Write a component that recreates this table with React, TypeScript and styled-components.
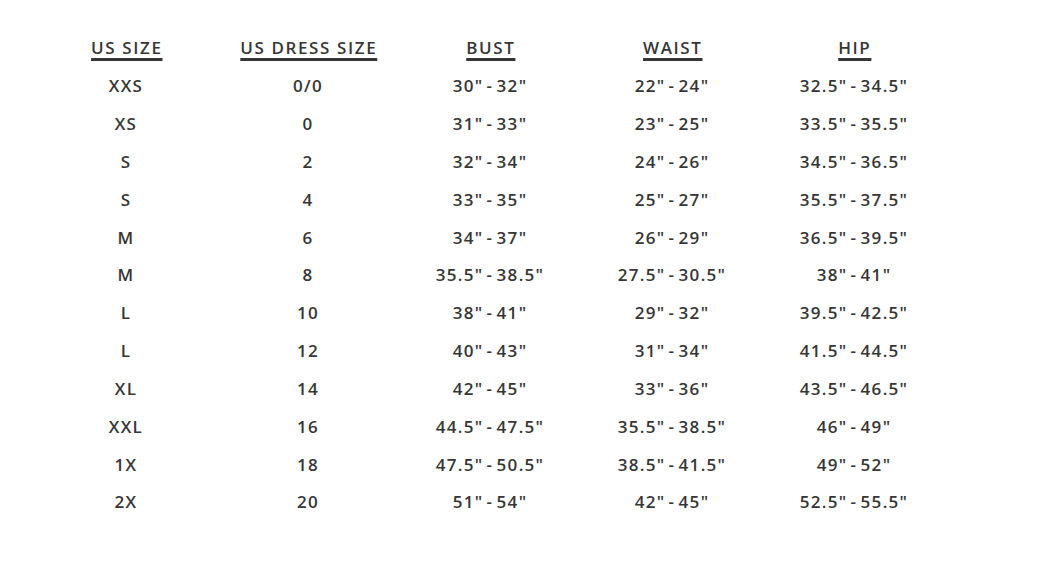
import { createGlobalStyle } from "styled-components";
import styled from "styled-components";

const GlobalStyle = createGlobalStyle`
  body {
    margin: 0;
    background: #ffffff;
    font-family: "Open Sans", "DejaVu Sans", sans-serif;
  }
`;

const headers = ["US SIZE", "US DRESS SIZE", "BUST", "WAIST", "HIP"];

const rows: string[][] = [
  ["XXS", "0/0", '30" - 32"', '22" - 24"', '32.5" - 34.5"'],
  ["XS", "0", '31" - 33"', '23" - 25"', '33.5" - 35.5"'],
  ["S", "2", '32" - 34"', '24" - 26"', '34.5" - 36.5"'],
  ["S", "4", '33" - 35"', '25" - 27"', '35.5" - 37.5"'],
  ["M", "6", '34" - 37"', '26" - 29"', '36.5" - 39.5"'],
  ["M", "8", '35.5" - 38.5"', '27.5" - 30.5"', '38" - 41"'],
  ["L", "10", '38" - 41"', '29" - 32"', '39.5" - 42.5"'],
  ["L", "12", '40" - 43"', '31" - 34"', '41.5" - 44.5"'],
  ["XL", "14", '42" - 45"', '33" - 36"', '43.5" - 46.5"'],
  ["XXL", "16", '44.5" - 47.5"', '35.5" - 38.5"', '46" - 49"'],
  ["1X", "18", '47.5" - 50.5"', '38.5" - 41.5"', '49" - 52"'],
  ["2X", "20", '51" - 54"', '42" - 45"', '52.5" - 55.5"'],
];

export default function App() {
  return (
    <>
      <GlobalStyle />
      <Page>
        <Chart>
          {headers.map((h) => (
            <HeadCell key={h}>
              <HeadText>{h}</HeadText>
            </HeadCell>
          ))}
          {rows.map((r, i) =>
            r.map((v, j) => <Cell key={`${i}-${j}`}>{v}</Cell>)
          )}
        </Chart>
      </Page>
    </>
  );
}

const Page = styled.div`
  width: 1050px;
  height: 570px;
  padding: 29px 0 0 35px;
  box-sizing: border-box;
  background: #fff;
`;

const Chart = styled.div`
  display: grid;
  grid-template-columns: repeat(5, 182px);
  grid-auto-rows: 37.83px;
  color: #363636;
`;

const HeadCell = styled.div`
  display: flex;
  align-items: center;
  justify-content: center;
  font-size: 17px;
  font-weight: 600;
  letter-spacing: 1.6px;
`;

const HeadText = styled.span`
  margin-right: -1.6px;
  text-decoration: underline;
  text-decoration-thickness: 3px;
  text-underline-offset: 4px;
`;

const Cell = styled.div`
  display: flex;
  align-items: center;
  justify-content: center;
  font-size: 17px;
  font-weight: 600;
  letter-spacing: 1.3px;
  word-spacing: -2.5px;
  white-space: pre;
`;
